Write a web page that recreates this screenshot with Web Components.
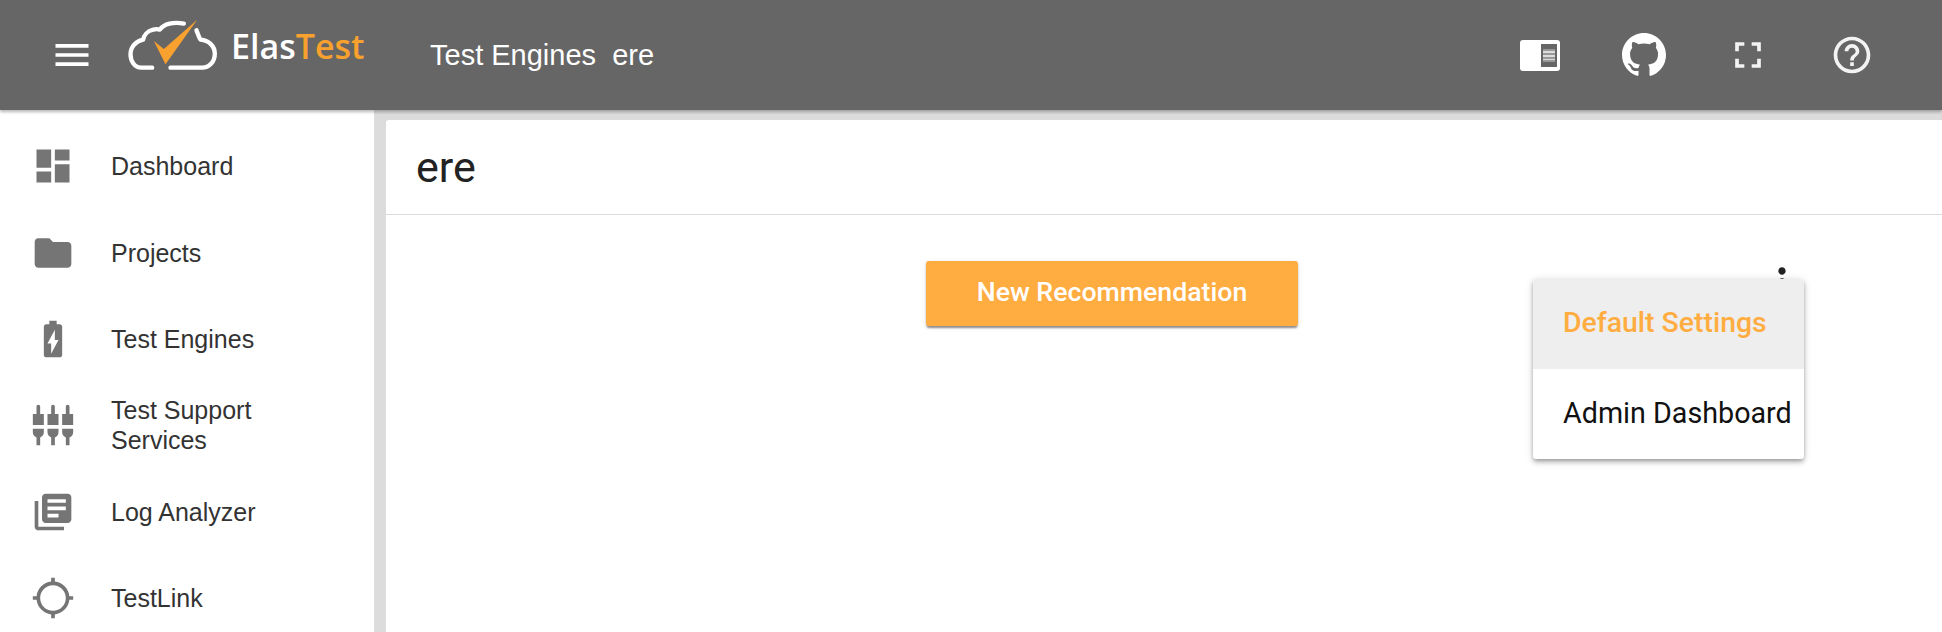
<!DOCTYPE html>
<html lang="en">
<head>
<meta charset="utf-8">
<title>ElasTest</title>
<style>
  html, body { margin: 0; height: 100%; overflow: hidden; background: #dcdcdc; }
  body { font-family: "Liberation Sans", Arial, sans-serif; }
</style>
</head>
<body>
<app-shell>
  <et-toolbar slot="top" heading="Test Engines&#160;&#160;ere"></et-toolbar>
  <side-nav slot="side">
    <nav-item icon="dashboard">Dashboard</nav-item>
    <nav-item icon="folder">Projects</nav-item>
    <nav-item icon="battery">Test Engines</nav-item>
    <nav-item icon="plugs">Test Support Services</nav-item>
    <nav-item icon="books">Log Analyzer</nav-item>
    <nav-item icon="target">TestLink</nav-item>
  </side-nav>
  <page-card heading="ere">
    <action-button>New Recommendation</action-button>
    <popup-menu slot="overlay">
      <menu-entry active>Default Settings</menu-entry>
      <menu-entry>Admin Dashboard</menu-entry>
    </popup-menu>
  </page-card>
</app-shell>

<script>
// Material icon paths, 24 unit grid
const ICONS = {
  menu: 'M3 18h18v-2H3v2zm0-5h18v-2H3v2zm0-7v2h18V6H3z',
  fullscreen: 'M7 14H5v5h5v-2H7v-3zm-2-4h2V7h3V5H5v5zm12 7h-3v2h5v-5h-2v3zM14 5v2h3v3h2V5h-5z',
  help: 'M11 18h2v-2h-2v2zm1-16C6.48 2 2 6.48 2 12s4.48 10 10 10 10-4.48 10-10S17.52 2 12 2zm0 18c-4.41 0-8-3.59-8-8s3.59-8 8-8 8 3.59 8 8-3.59 8-8 8zm0-14c-2.21 0-4 1.79-4 4h2c0-1.1.9-2 2-2s2 .9 2 2c0 2-3 1.75-3 5h2c0-2.25 3-2.5 3-5 0-2.21-1.79-4-4-4z',
  dashboard: 'M3 13h8V3H3v10zm0 8h8v-6H3v6zm10 0h8V11h-8v10zm0-18v6h8V3h-8z',
  folder: 'M10 4H4c-1.1 0-1.99.9-1.99 2L2 18c0 1.1.9 2 2 2h16c1.1 0 2-.9 2-2V8c0-1.1-.9-2-2-2h-8l-2-2z',
  battery: 'M15.67 4H14V2h-4v2H8.33C7.6 4 7 4.6 7 5.33v15.33C7 21.4 7.6 22 8.33 22h7.33c.74 0 1.34-.6 1.34-1.33V5.33C17 4.6 16.4 4 15.67 4zM11 20v-5.5H9L13 7v5.5h2L11 20z',
  plugs: 'M5 2c0-.55-.45-1-1-1s-1 .45-1 1v4H1v6h6V6H5V2zm4 14c0 1.3.84 2.4 2 2.82V23h2v-4.18c1.16-.41 2-1.51 2-2.82v-2H9v2zm-8 0c0 1.3.84 2.4 2 2.82V23h2v-4.18C6.16 18.4 7 17.3 7 16v-2H1v2zM21 6V2c0-.55-.45-1-1-1s-1 .45-1 1v4h-2v6h6V6h-2zm-8-4c0-.55-.45-1-1-1s-1 .45-1 1v4H9v6h6V6h-2V2zm4 14c0 1.3.84 2.4 2 2.82V23h2v-4.18c1.16-.41 2-1.51 2-2.82v-2h-6v2z',
  books: 'M4 6H2v14c0 1.1.9 2 2 2h14v-2H4V6zm16-4H8c-1.1 0-2 .9-2 2v12c0 1.1.9 2 2 2h12c1.1 0 2-.9 2-2V4c0-1.1-.9-2-2-2zm-1 9H9V9h10v2zm-4 4H9v-2h6v2zm4-8H9V5h10v2z',
  target: 'M20.94 11c-.46-4.17-3.77-7.48-7.94-7.94V1h-2v2.06C6.83 3.52 3.52 6.83 3.06 11H1v2h2.06c.46 4.17 3.77 7.48 7.94 7.94V23h2v-2.06c4.17-.46 7.48-3.77 7.94-7.94H23v-2h-2.06zM12 19c-3.87 0-7-3.13-7-7s3.13-7 7-7 7 3.13 7 7-3.13 7-7 7z',
  kebab: 'M12 8c1.1 0 2-.9 2-2s-.9-2-2-2-2 .9-2 2 .9 2 2 2zm0 2c-1.1 0-2 .9-2 2s.9 2 2 2 2-.9 2-2-.9-2-2-2zm0 6c-1.1 0-2 .9-2 2s.9 2 2 2 2-.9 2-2-.9-2-2-2z',
};

const GITHUB = 'M8 0C3.58 0 0 3.58 0 8c0 3.54 2.29 6.53 5.47 7.59.4.07.55-.17.55-.38 0-.19-.01-.82-.01-1.49-2.01.37-2.53-.49-2.69-.94-.09-.23-.48-.94-.82-1.13-.28-.15-.68-.52-.01-.53.63-.01 1.08.58 1.23.82.72 1.21 1.87.87 2.33.66.07-.52.28-.87.51-1.07-1.78-.2-3.64-.89-3.64-3.95 0-.87.31-1.59.82-2.15-.08-.2-.36-1.02.08-2.12 0 0 .67-.21 2.2.82.64-.18 1.32-.27 2-.27.68 0 1.36.09 2 .27 1.53-1.04 2.2-.82 2.2-.82.44 1.1.16 1.92.08 2.12.51.56.82 1.27.82 2.15 0 3.07-1.87 3.75-3.65 3.95.29.25.54.73.54 1.48 0 1.07-.01 1.93-.01 2.2 0 .21.15.46.55.38A8.013 8.013 0 0016 8c0-4.42-3.58-8-8-8z';

class MatIcon extends HTMLElement {
  connectedCallback() {
    if (this.shadowRoot) return;
    this.attachShadow({ mode: 'open' });
    const d = ICONS[this.getAttribute('name')] || '';
    this.shadowRoot.innerHTML = `
      <style>
        :host { display: block; width: 44px; height: 44px; flex: none; }
        svg { display: block; width: 100%; height: 100%; fill: currentColor; }
      </style>
      <svg viewBox="0 0 24 24"><path d="${d}"/></svg>`;
  }
}
customElements.define('mat-icon', MatIcon);

class AppShell extends HTMLElement {
  constructor() {
    super();
    this.attachShadow({ mode: 'open' }).innerHTML = `
      <style>
        :host { display: flex; flex-direction: column; height: 632px; overflow: hidden; }
        .body { flex: 1; display: flex; min-height: 0; }
        .main { flex: 1; min-width: 0; padding: 10px 0 0 12px; display: flex; }
        ::slotted(page-card) { flex: 1; }
      </style>
      <slot name="top"></slot>
      <div class="body">
        <slot name="side"></slot>
        <div class="main"><slot></slot></div>
      </div>`;
  }
}
customElements.define('app-shell', AppShell);

class EtToolbar extends HTMLElement {
  connectedCallback() {
    if (this.shadowRoot) return;
    this.attachShadow({ mode: 'open' });
    this.shadowRoot.innerHTML = `
      <style>
        :host {
          display: flex; align-items: center; height: 110px; padding: 0 38px 0 50px;
          background: #666; color: #fff; position: relative; z-index: 2;
          box-shadow: 0 2px 3px rgba(0,0,0,.28);
        }
        .logo { display: flex; align-items: center; gap: 12px; margin-left: 33px; margin-bottom: 22px; }
        .logo svg { display: block; width: 92px; height: 55px; }
        .word { font: 600 34px/1 "Open Sans", sans-serif; margin-top: 4px; width: 135px; white-space: nowrap; }
        .word b { font-weight: 600; color: #f9a12e; }
        h1 { margin: 0 0 0 64px; font: 400 29px/1 "Liberation Sans", sans-serif; flex: 1; white-space: nowrap; }
        .actions { display: flex; }
        .btn { width: 104px; height: 60px; display: flex; align-items: center; justify-content: center; }
        .btn svg { display: block; }
        .btn mat-icon { opacity: .92; }
      </style>
      <mat-icon name="menu"></mat-icon>
      <div class="logo">
        <svg viewBox="20 20 275 165" aria-hidden="true">
          <g fill="none" stroke="#fff" stroke-width="13" stroke-linecap="round" stroke-linejoin="round">
            <path d="M95 172H62C42 172 30 152 30 132C30 108 48 92 68 88C70 76 80 62 98 58C105 56 112 56 118 58C130 40 160 34 190 40"/>
            <path d="M228 60C232 70 236 82 240 88C265 90 283 108 283 130C283 155 265 172 245 172H150"/>
          </g>
          <path fill="#f9a12e" d="M100 92L130 116L230 28L135 162Z"/>
        </svg>
        <span class="word">Elas<b>Test</b></span>
      </div>
      <h1>${this.getAttribute('heading')}</h1>
      <div class="actions">
        <div class="btn">
          <svg width="40" height="31" viewBox="0 0 40 31">
            <rect width="40" height="31" rx="3" fill="#fff"/>
            <rect x="21" y="4" width="16" height="23" fill="#666"/>
            <rect x="23" y="9" width="12" height="13" fill="#999"/>
            <path d="M23 11h12v2H23zM23 15h12v2H23zM23 19h12v1H23z" fill="#ddd"/>
          </svg>
        </div>
        <div class="btn">
          <svg width="44" height="44" viewBox="0 0 16 16"><path fill="#fff" d="${GITHUB}"/></svg>
        </div>
        <div class="btn"><mat-icon name="fullscreen"></mat-icon></div>
        <div class="btn"><mat-icon name="help"></mat-icon></div>
      </div>`;
  }
}
customElements.define('et-toolbar', EtToolbar);

class SideNav extends HTMLElement {
  constructor() {
    super();
    this.attachShadow({ mode: 'open' }).innerHTML = `
      <style>
        :host {
          display: flex; flex-direction: column; width: 374px; flex: none;
          padding-top: 13px; background: #fff; box-sizing: border-box;
        }
      </style>
      <slot></slot>`;
  }
}
customElements.define('side-nav', SideNav);

class NavItem extends HTMLElement {
  connectedCallback() {
    if (this.shadowRoot) return;
    this.attachShadow({ mode: 'open' });
    this.shadowRoot.innerHTML = `
      <style>
        :host { display: flex; align-items: center; height: 86.4px; flex: none; padding-left: 31px; color: #757575; }
        .label { margin-left: 36px; width: 175px; font: 400 25px/30px "Liberation Sans", sans-serif; color: #333; }
      </style>
      <mat-icon name="${this.getAttribute('icon')}"></mat-icon>
      <span class="label"><slot></slot></span>`;
  }
}
customElements.define('nav-item', NavItem);

class PageCard extends HTMLElement {
  connectedCallback() {
    if (this.shadowRoot) return;
    this.attachShadow({ mode: 'open' });
    this.shadowRoot.innerHTML = `
      <style>
        :host { display: flex; flex-direction: column; background: #fff; border-radius: 3px 0 0 0; }
        header {
          height: 95px; box-sizing: border-box; padding-left: 30px; display: flex; align-items: center;
          border-bottom: 1px solid #ddd; font: 400 43px/1 "Roboto", sans-serif; color: #222;
        }
        .content { position: relative; flex: 1; padding: 46px 0 0 540px; }
        .more { position: absolute; left: 1374px; top: 45px; color: #222; }
      </style>
      <header>${this.getAttribute('heading')}</header>
      <div class="content">
        <slot></slot>
        <mat-icon class="more" name="kebab"></mat-icon>
        <slot name="overlay"></slot>
      </div>`;
  }
}
customElements.define('page-card', PageCard);

class ActionButton extends HTMLElement {
  constructor() {
    super();
    this.attachShadow({ mode: 'open' }).innerHTML = `
      <style>
        :host {
          display: inline-flex; align-items: center; justify-content: center; padding-bottom: 2px;
          width: 372px; height: 65px; box-sizing: border-box; border-radius: 3px; background: #ffac41; color: #fff;
          font: 500 26.7px/1 "Roboto", sans-serif;
          box-shadow: 0 3px 2px -1px rgba(0,0,0,.3), 0 2px 2px rgba(0,0,0,.14), 0 1px 5px rgba(0,0,0,.12);
        }
      </style>
      <slot></slot>`;
  }
}
customElements.define('action-button', ActionButton);

class PopupMenu extends HTMLElement {
  constructor() {
    super();
    this.attachShadow({ mode: 'open' }).innerHTML = `
      <style>
        :host {
          position: absolute; left: 1147px; top: 64px; width: 271px; background: #fff;
          display: block; border-radius: 3px; overflow: hidden;
          box-shadow: 0 2px 4px -1px rgba(0,0,0,.3), 0 4px 5px rgba(0,0,0,.14), 0 1px 10px rgba(0,0,0,.12);
        }
      </style>
      <slot></slot>`;
  }
}
customElements.define('popup-menu', PopupMenu);

class MenuEntry extends HTMLElement {
  constructor() {
    super();
    this.attachShadow({ mode: 'open' }).innerHTML = `
      <style>
        :host {
          display: flex; align-items: center; height: 90px; padding: 0 0 2px 30px; box-sizing: border-box;
          font: 400 28.7px/1 "Roboto", sans-serif; color: #111; white-space: nowrap;
        }
        :host([active]) { background: #eee; color: #ffac41; font-weight: 500; font-size: 28.4px; }
      </style>
      <slot></slot>`;
  }
}
customElements.define('menu-entry', MenuEntry);
</script>
</body>
</html>
